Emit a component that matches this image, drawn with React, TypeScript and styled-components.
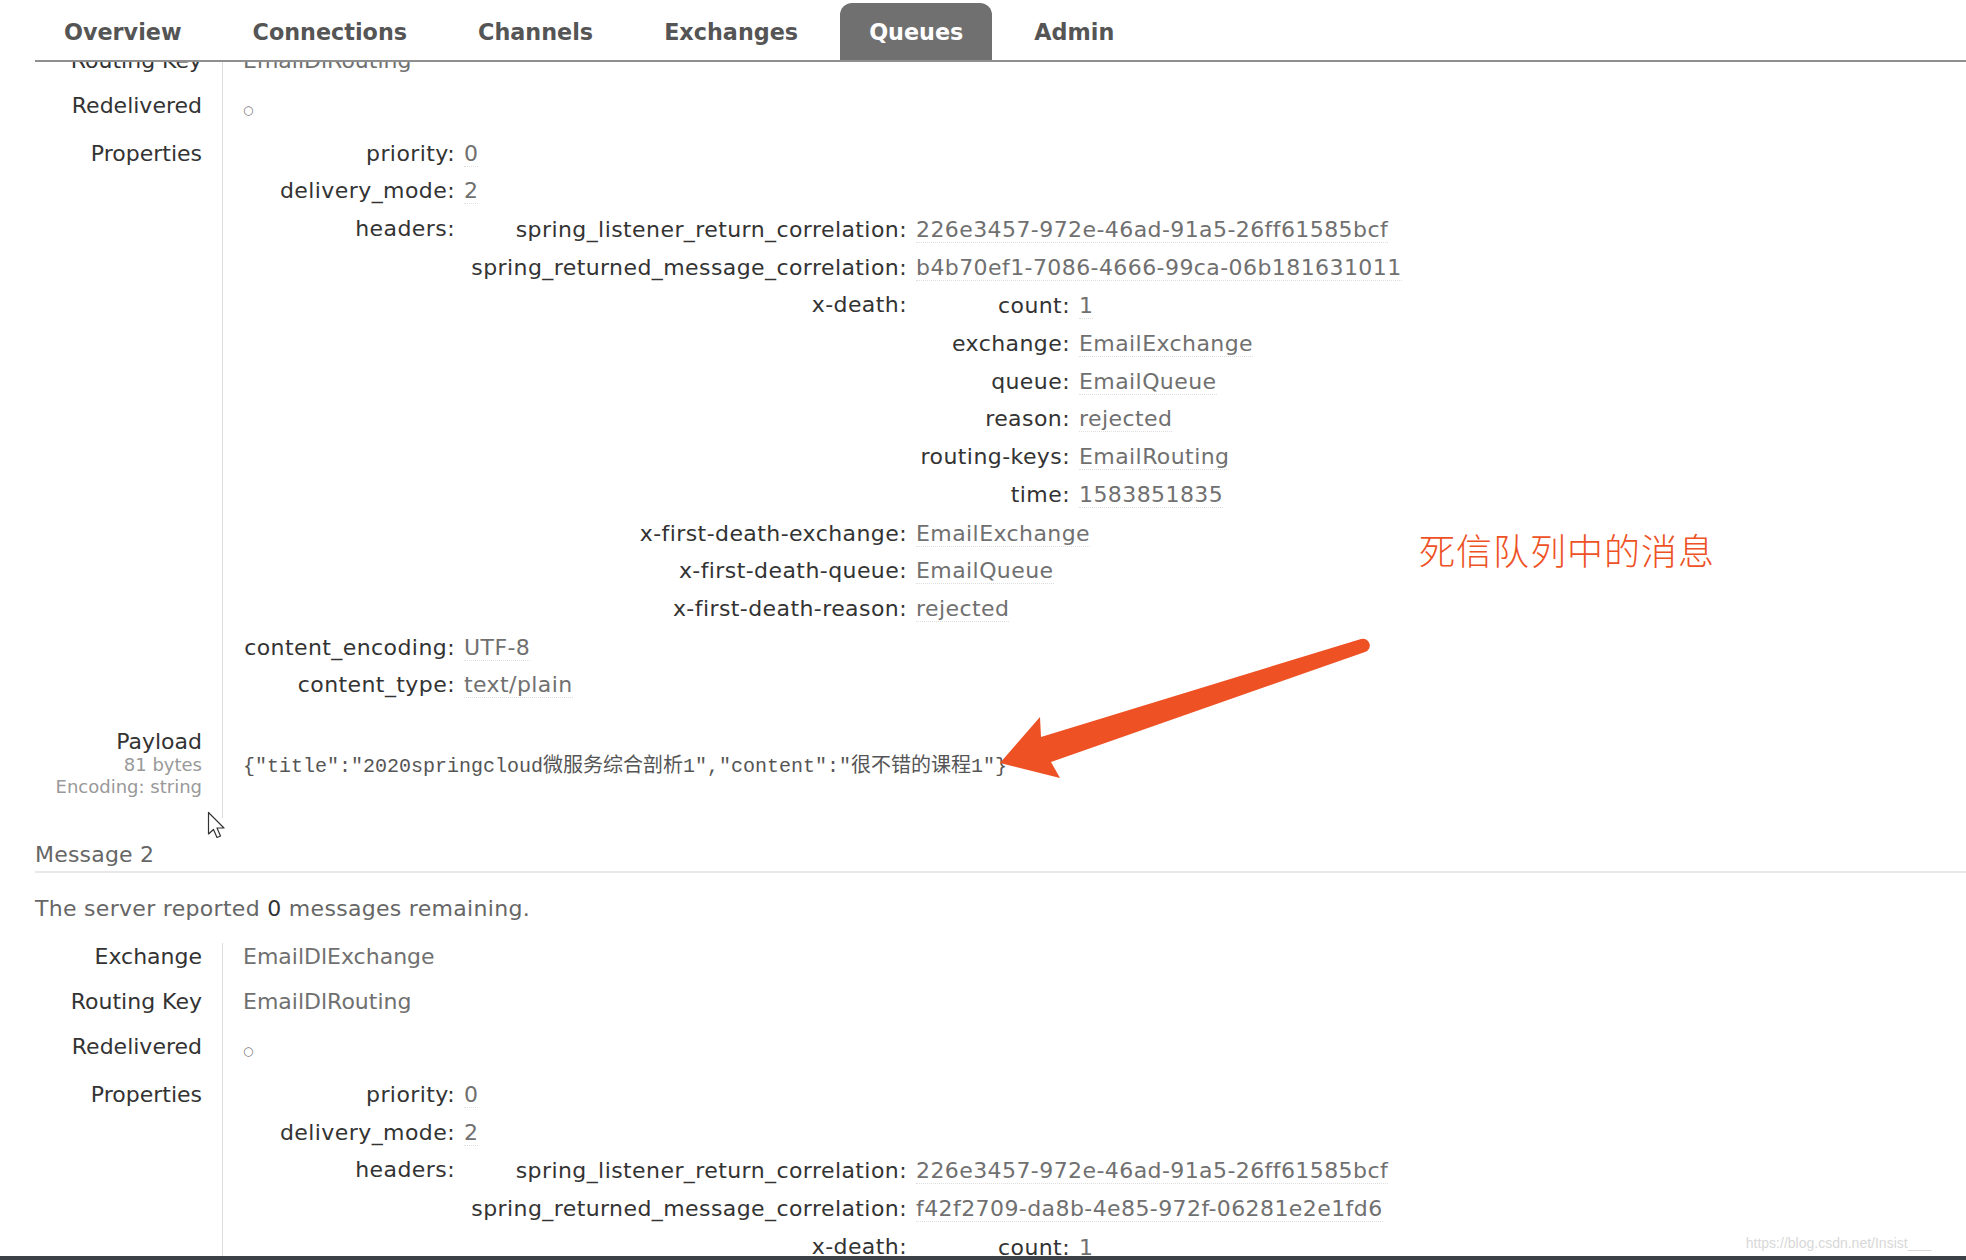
import * as React from 'react';
import styled, { createGlobalStyle } from 'styled-components';

const GlobalStyle = createGlobalStyle`
  html, body {
    margin: 0;
    padding: 0;
    background: #fff;
    overflow: hidden;
  }
  body {
    font-family: "DejaVu Sans", Verdana, "Noto Sans CJK SC", sans-serif;
    font-size: 22px;
  }
`;

const Page = styled.div`
  position: relative;
  width: 1966px;
  height: 1260px;
  display: flex;
  flex-direction: column;
  overflow: hidden;
  background: #fff;
`;

const Nav = styled.nav`
  flex: none;
  height: 60px;
  margin-left: 35px;
  border-bottom: 2px solid #8f8f8f;
  display: flex;
  align-items: flex-end;
  gap: 13px;
`;

const Tab = styled.div<{ $active?: boolean }>`
  height: 57px;
  line-height: 58px;
  padding: 0 29px;
  border-radius: 12px 12px 0 0;
  font-weight: bold;
  font-size: 22.3px;
  color: ${p => (p.$active ? '#fff' : '#555')};
  background: ${p => (p.$active ? '#707070' : 'transparent')};
`;

const Viewport = styled.main`
  flex: 1;
  min-height: 0;
  overflow: hidden;
`;

// the page is scrolled: the first message's top rows sit under the nav
const Scroll = styled.div`
  margin-top: -15.5px;
`;

const Heading = styled.h2`
  margin: 22.5px 0 0 35px;
  padding: 0 0 3px;
  font-size: 22px;
  font-weight: normal;
  line-height: 27px;
  letter-spacing: 0.2px;
  color: #666;
  border-bottom: 2px solid #e8e8e8;
`;

const Remaining = styled.p`
  margin: 22.5px 0 0 35px;
  line-height: 27px;
  letter-spacing: 0.3px;
  color: #666;
  b {
    font-weight: normal;
    color: #333;
  }
`;

const Facts = styled.div<{ $top?: number }>`
  margin-top: ${p => p.$top ?? 21}px;
  display: grid;
  grid-template-columns: 222px 1fr;
`;

const Label = styled.div<{ $bottom?: number }>`
  text-align: right;
  padding: 0 20px ${p => p.$bottom ?? 18}px 0;
  color: #333;
  line-height: 27px;
  white-space: nowrap;
`;

const Value = styled.div<{ $bottom?: number }>`
  border-left: 1px solid #dcdcdc;
  padding: 0 0 ${p => p.$bottom ?? 18}px 20px;
  color: #707070;
  line-height: 27px;
  white-space: nowrap;
`;

const Circle = styled.span`
  font-size: 12px;
  line-height: 1;
  vertical-align: -1px;
  color: #777;
`;

const Props = styled.div<{ $keyWidth: number; $top?: number }>`
  display: grid;
  grid-template-columns: ${p => p.$keyWidth}px auto;
  column-gap: 9px;
  justify-content: start;
  margin-top: ${p => p.$top ?? 0}px;
  letter-spacing: 0.42px;
`;

const PKey = styled.div`
  text-align: right;
  padding: 5px 0;
  line-height: 27.7px;
  color: #333;
  white-space: nowrap;
`;

const PVal = styled.div`
  padding: 5px 0;
  line-height: 27.7px;
  color: #707070;
  white-space: nowrap;
`;

const PCell = styled.div`
  padding: 1px 0;
`;

const Val = styled.span`
  border-bottom: 1px dotted #dedede;
`;

const PayloadLabel = styled.div`
  text-align: right;
  padding: 0 20px 20px 0;
  white-space: nowrap;
`;

const PayloadTitle = styled.div`
  line-height: 24px;
  color: #333;
`;

const PayloadMeta = styled.div`
  font-size: 18px;
  line-height: 22px;
  color: #999;
`;

const PayloadText = styled.pre`
  margin: 25px 0 0;
  font-family: "Liberation Mono", "Noto Sans CJK SC", monospace;
  font-size: 20px;
  line-height: 24px;
  color: #555;
`;

const Note = styled.div`
  position: absolute;
  left: 1419px;
  top: 530px;
  font-family: "Noto Sans CJK SC", sans-serif;
  font-weight: 300;
  font-size: 36px;
  line-height: 38px;
  color: #ee5124;
  letter-spacing: 1px;
`;

const ArrowSvg = styled.svg`
  position: absolute;
  left: 990px;
  top: 630px;
  pointer-events: none;
`;

const CursorSvg = styled.svg`
  position: absolute;
  left: 207px;
  top: 811px;
  pointer-events: none;
`;

const Watermark = styled.div`
  position: absolute;
  right: 35px;
  bottom: 9px;
  font-family: "Liberation Sans", sans-serif;
  font-size: 14px;
  color: #d8d8d8;
`;

const BottomBar = styled.div`
  flex: none;
  height: 4px;
  background: #3b4146;
`;

type Row = [string, string | Row[]];

const KEY_WIDTHS = [212, 443, 154];

const PropTable: React.FC<{ rows: Row[]; depth?: number; top?: number }> = ({ rows, depth = 0, top }) => (
  <Props $keyWidth={KEY_WIDTHS[depth]} $top={top}>
    {rows.map(([k, v]) => (
      <React.Fragment key={k}>
        <PKey>{k}:</PKey>
        {typeof v === 'string' ? (
          <PVal>
            <Val>{v}</Val>
          </PVal>
        ) : (
          <PCell>
            <PropTable rows={v} depth={depth + 1} />
          </PCell>
        )}
      </React.Fragment>
    ))}
  </Props>
);

const props1: Row[] = [
  ['priority', '0'],
  ['delivery_mode', '2'],
  [
    'headers',
    [
      ['spring_listener_return_correlation', '226e3457-972e-46ad-91a5-26ff61585bcf'],
      ['spring_returned_message_correlation', 'b4b70ef1-7086-4666-99ca-06b181631011'],
      [
        'x-death',
        [
          ['count', '1'],
          ['exchange', 'EmailExchange'],
          ['queue', 'EmailQueue'],
          ['reason', 'rejected'],
          ['routing-keys', 'EmailRouting'],
          ['time', '1583851835'],
        ],
      ],
      ['x-first-death-exchange', 'EmailExchange'],
      ['x-first-death-queue', 'EmailQueue'],
      ['x-first-death-reason', 'rejected'],
    ],
  ],
  ['content_encoding', 'UTF-8'],
  ['content_type', 'text/plain'],
];

// only the part of message 2 that is above the fold
const props2: Row[] = [
  ['priority', '0'],
  ['delivery_mode', '2'],
  [
    'headers',
    [
      ['spring_listener_return_correlation', '226e3457-972e-46ad-91a5-26ff61585bcf'],
      ['spring_returned_message_correlation', 'f42f2709-da8b-4e85-972f-06281e2e1fd6'],
      ['x-death', [['count', '1']]],
    ],
  ],
];

const RedeliveredRow: React.FC = () => (
  <>
    <Label $bottom={21}>Redelivered</Label>
    <Value $bottom={21}>
      <Circle>○</Circle>
    </Value>
  </>
);

const App: React.FC = () => (
  <Page>
    <GlobalStyle />
    <Nav>
      {['Overview', 'Connections', 'Channels', 'Exchanges', 'Queues', 'Admin'].map(t => (
        <Tab key={t} $active={t === 'Queues'}>
          {t}
        </Tab>
      ))}
    </Nav>
    <Viewport>
      <Scroll>
        <Facts $top={0}>
          <Label>Routing Key</Label>
          <Value>EmailDlRouting</Value>
          <RedeliveredRow />
          <Label>Properties</Label>
          <Value $bottom={26}>
            <PropTable rows={props1} top={-5} />
          </Value>
          <PayloadLabel>
            <PayloadTitle>Payload</PayloadTitle>
            <PayloadMeta>81 bytes</PayloadMeta>
            <PayloadMeta>Encoding: string</PayloadMeta>
          </PayloadLabel>
          <Value $bottom={0}>
            <PayloadText>{'{"title":"2020springcloud微服务综合剖析1","content":"很不错的课程1"}'}</PayloadText>
          </Value>
        </Facts>

        <Heading>Message 2</Heading>
        <Remaining>
          The server reported <b>0</b> messages remaining.
        </Remaining>
        <Facts>
          <Label>Exchange</Label>
          <Value>EmailDlExchange</Value>
          <Label>Routing Key</Label>
          <Value>EmailDlRouting</Value>
          <RedeliveredRow />
          <Label>Properties</Label>
          <Value>
            <PropTable rows={props2} top={-5} />
          </Value>
        </Facts>
      </Scroll>
    </Viewport>
    <BottomBar />
    <Note>死信队列中的消息</Note>
    <ArrowSvg width="390" height="160" viewBox="990 630 390 160">
      <path
        d="M1000,763 L1040,717 L1041,737 L1361,639 A6.5,6.5 0 0 1 1365,652 L1051,762 L1060,778 Z"
        fill="#ee5124"
      />
    </ArrowSvg>
    <CursorSvg width="22" height="30" viewBox="0 0 22 30">
      <path
        d="M1.5,1.5 L1.5,23 L6.5,18.5 L10,26.5 L13.5,25 L10,17 L17,17 Z"
        fill="#fff"
        stroke="#333"
        strokeWidth="1.2"
        strokeLinejoin="round"
      />
    </CursorSvg>
    <Watermark>https://blog.csdn.net/Insist___</Watermark>
  </Page>
);

export default App;
